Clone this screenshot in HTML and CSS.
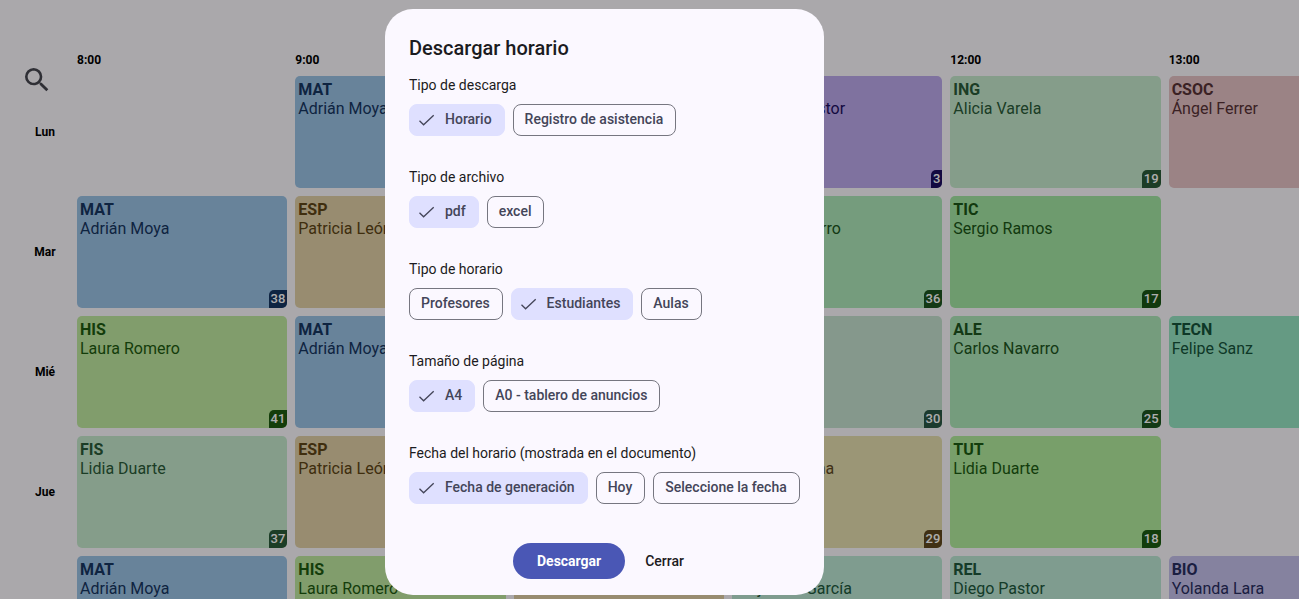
FILE: index.html
```html
<!DOCTYPE html>
<html lang="es">
<head>
<meta charset="utf-8">
<meta name="viewport" content="width=device-width, initial-scale=1">
<title>Descargar horario</title>
<link rel="stylesheet" href="styles.css">
</head>
<body>
<main class="page">
  <button class="search" type="button" aria-label="Buscar">
    <svg viewBox="0 0 24 24" width="32" height="32" aria-hidden="true"><path fill="currentColor" d="M15.5 14h-.79l-.28-.27A6.47 6.47 0 0 0 16 9.5 6.5 6.5 0 1 0 9.5 16c1.61 0 3.09-.59 4.23-1.57l.27.28v.79l5 4.99L20.49 19l-4.99-5zm-6 0C7.01 14 5 11.99 5 9.5S7.01 5 9.5 5 14 7.01 14 9.5 11.99 14 9.5 14z"/></svg>
  </button>
  <table class="timetable">
    <thead>
      <tr><td class="corner"></td><th scope="col">8:00</th><th scope="col">9:00</th><th scope="col"></th><th scope="col"></th><th scope="col">12:00</th><th scope="col">13:00</th></tr>
    </thead>
    <tbody>
      <tr>
        <th scope="row">Lun</th>
        <td></td>
        <td><div class="lesson mat"><b>MAT</b><span>Adrián Moya</span></div></td>
        <td></td>
        <td><div class="lesson rel-purple"><b>REL</b><span>Diego A. Pastor</span><em class="room">3</em></div></td>
        <td><div class="lesson fis"><b>ING</b><span>Alicia Varela</span><em class="room">19</em></div></td>
        <td><div class="lesson csoc"><b>CSOC</b><span>Ángel Ferrer</span></div></td>
      </tr>
      <tr>
        <th scope="row">Mar</th>
        <td><div class="lesson mat"><b>MAT</b><span>Adrián Moya</span><em class="room">38</em></div></td>
        <td><div class="lesson esp"><b>ESP</b><span>Patricia León</span></div></td>
        <td></td>
        <td><div class="lesson ale"><b>ALE</b><span>Carlos Navarro</span><em class="room">36</em></div></td>
        <td><div class="lesson tic"><b>TIC</b><span>Sergio Ramos</span><em class="room">17</em></div></td>
        <td></td>
      </tr>
      <tr>
        <th scope="row">Mié</th>
        <td><div class="lesson his"><b>HIS</b><span>Laura Romero</span><em class="room">41</em></div></td>
        <td><div class="lesson mat"><b>MAT</b><span>Adrián Moya</span></div></td>
        <td></td>
        <td><div class="lesson mus"><em class="room">30</em></div></td>
        <td><div class="lesson ale"><b>ALE</b><span>Carlos Navarro</span><em class="room">25</em></div></td>
        <td><div class="lesson tecn"><b>TECN</b><span>Felipe Sanz</span></div></td>
      </tr>
      <tr>
        <th scope="row">Jue</th>
        <td><div class="lesson fis"><b>FIS</b><span>Lidia Duarte</span><em class="room">37</em></div></td>
        <td><div class="lesson esp"><b>ESP</b><span>Patricia León</span></div></td>
        <td></td>
        <td><div class="lesson geo"><b>GEO</b><span>Marta Medina</span><em class="room">29</em></div></td>
        <td><div class="lesson tut"><b>TUT</b><span>Lidia Duarte</span><em class="room">18</em></div></td>
        <td></td>
      </tr>
      <tr>
        <th scope="row"></th>
        <td><div class="lesson mat"><b>MAT</b><span>Adrián Moya</span></div></td>
        <td><div class="lesson his"><b>HIS</b><span>Laura Romero</span></div></td>
        <td><div class="lesson esp"></div></td>
        <td><div class="lesson rel"><b>EF</b><span>Alejandra García</span></div></td>
        <td><div class="lesson rel"><b>REL</b><span>Diego Pastor</span></div></td>
        <td><div class="lesson bio"><b>BIO</b><span>Yolanda Lara</span></div></td>
      </tr>
    </tbody>
  </table>
</main>

<div class="scrim">
  <form class="dialog" role="dialog" aria-modal="true" aria-labelledby="dialog-title">
    <h1 class="dialog-title" id="dialog-title">Descargar horario</h1>
    <div class="groups">
      <fieldset class="group">
        <legend>Tipo de descarga</legend>
        <div class="chips">
          <label class="chip"><input type="radio" name="descarga" checked><svg class="check" viewBox="0 0 18 18" aria-hidden="true"><path d="M1.5 9.8 5.6 13.8 15.7 4.2"/></svg><span>Horario</span></label>
          <label class="chip"><input type="radio" name="descarga"><span>Registro de asistencia</span></label>
        </div>
      </fieldset>
      <fieldset class="group">
        <legend>Tipo de archivo</legend>
        <div class="chips">
          <label class="chip"><input type="radio" name="archivo" checked><svg class="check" viewBox="0 0 18 18" aria-hidden="true"><path d="M1.5 9.8 5.6 13.8 15.7 4.2"/></svg><span>pdf</span></label>
          <label class="chip"><input type="radio" name="archivo"><span>excel</span></label>
        </div>
      </fieldset>
      <fieldset class="group">
        <legend>Tipo de horario</legend>
        <div class="chips">
          <label class="chip"><input type="radio" name="horario"><span>Profesores</span></label>
          <label class="chip"><input type="radio" name="horario" checked><svg class="check" viewBox="0 0 18 18" aria-hidden="true"><path d="M1.5 9.8 5.6 13.8 15.7 4.2"/></svg><span>Estudiantes</span></label>
          <label class="chip"><input type="radio" name="horario"><span>Aulas</span></label>
        </div>
      </fieldset>
      <fieldset class="group">
        <legend>Tamaño de página</legend>
        <div class="chips">
          <label class="chip"><input type="radio" name="pagina" checked><svg class="check" viewBox="0 0 18 18" aria-hidden="true"><path d="M1.5 9.8 5.6 13.8 15.7 4.2"/></svg><span>A4</span></label>
          <label class="chip"><input type="radio" name="pagina"><span>A0 - tablero de anuncios</span></label>
        </div>
      </fieldset>
      <fieldset class="group">
        <legend>Fecha del horario (mostrada en el documento)</legend>
        <div class="chips">
          <label class="chip"><input type="radio" name="fecha" checked><svg class="check" viewBox="0 0 18 18" aria-hidden="true"><path d="M1.5 9.8 5.6 13.8 15.7 4.2"/></svg><span>Fecha de generación</span></label>
          <label class="chip"><input type="radio" name="fecha"><span>Hoy</span></label>
          <label class="chip"><input type="radio" name="fecha"><span>Seleccione la fecha</span></label>
        </div>
      </fieldset>
    </div>
    <div class="actions">
      <button class="btn primary" type="button">Descargar</button>
      <button class="btn" type="button">Cerrar</button>
    </div>
  </form>
</div>
</body>
</html>
```
FILE: styles.css
```css
* { box-sizing: border-box; }

body {
  margin: 0;
  height: 100vh;
  overflow: hidden;
  background: #fbf8fd;
  color: #1b1b21;
  font-family: Roboto, "Liberation Sans", sans-serif;
}

.page {
  height: 100vh;
  padding-top: 44px;
  overflow: hidden;
}

.search {
  position: absolute;
  top: 64px;
  left: 21px;
  width: 32px;
  height: 32px;
  padding: 0;
  border: 0;
  background: none;
  color: #46464f;
}

/* Timetable */
.timetable {
  width: calc(100% + 88px);
  table-layout: fixed;
  border-collapse: separate;
  border-spacing: 8px;
}
.timetable td, .timetable th { padding: 0; }
.timetable th { height: 16px; font-size: 12px; line-height: 16px; font-weight: 700; color: #000; }
.timetable thead th { text-align: left; }
.timetable tbody th { padding-left: 13px; }
.corner { width: 61px; }

.lesson {
  --ink: #163560;
  position: relative;
  height: 112px;
  padding: 4px 3px;
  border-radius: 5px;
  overflow: hidden;
  color: var(--ink);
  font-size: 16px;
  line-height: 19px;
}
.lesson b, .lesson span { display: block; white-space: nowrap; }
.room {
  position: absolute;
  right: 0;
  bottom: 0;
  height: 18px;
  padding: 0 2px;
  border-top-left-radius: 5px;
  background: var(--ink);
  color: #fff;
  font-size: 13px;
  font-style: normal;
  font-weight: 500;
  line-height: 18px;
}
.mat { background: #9ac1e4; --ink: #163560; }
.esp { background: #e0cfa6; --ink: #5d4415; }
.his { background: #bfe79f; --ink: #1d5a10; }
.fis { background: #c5e8cc; --ink: #2a5a38; }
.rel-purple { background: #bca8eb; --ink: #1d0f60; }
.csoc { background: #e5c1c4; --ink: #573236; }
.ale { background: #ade6b8; --ink: #1c5420; }
.tic { background: #a2e5a2; --ink: #1a5416; }
.mus { background: #c5e1cf; --ink: #2a5745; }
.tecn { background: #95e4c2; --ink: #15533a; }
.geo { background: #e5deaf; --ink: #5f481e; }
.tut { background: #b2ea9c; --ink: #1b5a12; }
.rel { background: #bbe6d3; --ink: #20583c; }
.bio { background: #c5c0eb; --ink: #292d60; }

/* Dialog */
.scrim {
  position: fixed;
  inset: 0;
  display: flex;
  align-items: center;
  justify-content: center;
  padding: 5px 90px 0 0;
  background: rgba(0, 0, 0, .32);
}
.dialog {
  min-width: 439px;
  padding: 24px 24px 16px;
  border-radius: 28px;
  background: #fbf8ff;
}
.dialog-title { margin: 0 0 12px; font-size: 20px; line-height: 30px; font-weight: 500; }
.groups { display: flex; flex-direction: column; gap: 31px; }
.group { min-width: 0; margin: 0; padding: 0; border: 0; }
.group legend { padding: 0; margin-bottom: 8px; font-size: 14px; line-height: 21px; }
.chips { display: flex; gap: 8px; }
.chip {
  position: relative;
  display: flex;
  align-items: center;
  gap: 9px;
  height: 32px;
  padding: 0 12px 0 11px;
  border: 1px solid #767680;
  border-radius: 8px;
  color: #444559;
  font-size: 14px;
  line-height: 20px;
  font-weight: 500;
  white-space: nowrap;
}
.chip span { padding-bottom: 2px; }
.chip input { position: absolute; inset: 0; margin: 0; opacity: 0; }
.chip:has(input:checked) {
  padding-left: 8px;
  border-color: #dfe0ff;
  background: #dfe0ff;
}
.check { width: 18px; height: 18px; fill: none; stroke: currentColor; stroke-width: 1.3; }

.actions { display: flex; justify-content: center; gap: 8px; margin-top: 39px; }
.btn {
  height: 36px;
  padding: 0 12px;
  border: 0;
  border-radius: 18px;
  background: none;
  color: #1b1b21;
  font: 500 14px/20px Roboto, "Liberation Sans", sans-serif;
}
.btn.primary { padding: 0 24px; background: #4a57b5; color: #fff; font-weight: 700; }
```
